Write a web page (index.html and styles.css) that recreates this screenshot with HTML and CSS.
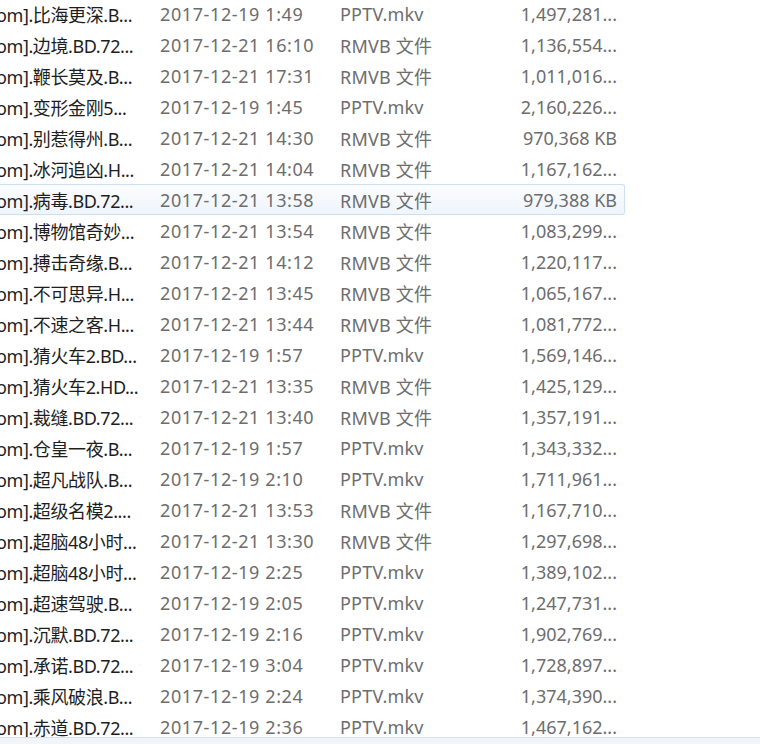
FILE: index.html
```html
<!DOCTYPE html>
<html>
  <head>
    <meta charset="utf-8" />
    <title>文件列表</title>
    <link rel="stylesheet" href="styles.css">
  </head>
  <body>
    <div class="pane">
      <div class="list">
        <div class="row"><span class="name"><span class="clip">om].比海更深.B...</span></span><span class="date">2017-12-19 1:49</span><span class="type">PPTV.mkv</span><span class="size">1,497,281...</span></div>
        <div class="row"><span class="name"><span class="clip">om].边境.BD.72...</span></span><span class="date">2017-12-21 16:10</span><span class="type">RMVB 文件</span><span class="size">1,136,554...</span></div>
        <div class="row"><span class="name"><span class="clip">om].鞭长莫及.B...</span></span><span class="date">2017-12-21 17:31</span><span class="type">RMVB 文件</span><span class="size">1,011,016...</span></div>
        <div class="row"><span class="name"><span class="clip">om].变形金刚5...</span></span><span class="date">2017-12-19 1:45</span><span class="type">PPTV.mkv</span><span class="size">2,160,226...</span></div>
        <div class="row"><span class="name"><span class="clip">om].别惹得州.B...</span></span><span class="date">2017-12-21 14:30</span><span class="type">RMVB 文件</span><span class="size">970,368 KB</span></div>
        <div class="row"><span class="name"><span class="clip">om].冰河追凶.H...</span></span><span class="date">2017-12-21 14:04</span><span class="type">RMVB 文件</span><span class="size">1,167,162...</span></div>
        <div class="row hot"><span class="name"><span class="clip">om].病毒.BD.72...</span></span><span class="date">2017-12-21 13:58</span><span class="type">RMVB 文件</span><span class="size">979,388 KB</span></div>
        <div class="row"><span class="name"><span class="clip">om].博物馆奇妙...</span></span><span class="date">2017-12-21 13:54</span><span class="type">RMVB 文件</span><span class="size">1,083,299...</span></div>
        <div class="row"><span class="name"><span class="clip">om].搏击奇缘.B...</span></span><span class="date">2017-12-21 14:12</span><span class="type">RMVB 文件</span><span class="size">1,220,117...</span></div>
        <div class="row"><span class="name"><span class="clip">om].不可思异.H...</span></span><span class="date">2017-12-21 13:45</span><span class="type">RMVB 文件</span><span class="size">1,065,167...</span></div>
        <div class="row"><span class="name"><span class="clip">om].不速之客.H...</span></span><span class="date">2017-12-21 13:44</span><span class="type">RMVB 文件</span><span class="size">1,081,772...</span></div>
        <div class="row"><span class="name"><span class="clip">om].猜火车2.BD...</span></span><span class="date">2017-12-19 1:57</span><span class="type">PPTV.mkv</span><span class="size">1,569,146...</span></div>
        <div class="row"><span class="name"><span class="clip">om].猜火车2.HD...</span></span><span class="date">2017-12-21 13:35</span><span class="type">RMVB 文件</span><span class="size">1,425,129...</span></div>
        <div class="row"><span class="name"><span class="clip">om].裁缝.BD.72...</span></span><span class="date">2017-12-21 13:40</span><span class="type">RMVB 文件</span><span class="size">1,357,191...</span></div>
        <div class="row"><span class="name"><span class="clip">om].仓皇一夜.B...</span></span><span class="date">2017-12-19 1:57</span><span class="type">PPTV.mkv</span><span class="size">1,343,332...</span></div>
        <div class="row"><span class="name"><span class="clip">om].超凡战队.B...</span></span><span class="date">2017-12-19 2:10</span><span class="type">PPTV.mkv</span><span class="size">1,711,961...</span></div>
        <div class="row"><span class="name"><span class="clip">om].超级名模2....</span></span><span class="date">2017-12-21 13:53</span><span class="type">RMVB 文件</span><span class="size">1,167,710...</span></div>
        <div class="row"><span class="name"><span class="clip">om].超脑48小时...</span></span><span class="date">2017-12-21 13:30</span><span class="type">RMVB 文件</span><span class="size">1,297,698...</span></div>
        <div class="row"><span class="name"><span class="clip">om].超脑48小时...</span></span><span class="date">2017-12-19 2:25</span><span class="type">PPTV.mkv</span><span class="size">1,389,102...</span></div>
        <div class="row"><span class="name"><span class="clip">om].超速驾驶.B...</span></span><span class="date">2017-12-19 2:05</span><span class="type">PPTV.mkv</span><span class="size">1,247,731...</span></div>
        <div class="row"><span class="name"><span class="clip">om].沉默.BD.72...</span></span><span class="date">2017-12-19 2:16</span><span class="type">PPTV.mkv</span><span class="size">1,902,769...</span></div>
        <div class="row"><span class="name"><span class="clip">om].承诺.BD.72...</span></span><span class="date">2017-12-19 3:04</span><span class="type">PPTV.mkv</span><span class="size">1,728,897...</span></div>
        <div class="row"><span class="name"><span class="clip">om].乘风破浪.B...</span></span><span class="date">2017-12-19 2:24</span><span class="type">PPTV.mkv</span><span class="size">1,374,390...</span></div>
        <div class="row"><span class="name"><span class="clip">om].赤道.BD.72...</span></span><span class="date">2017-12-19 2:36</span><span class="type">PPTV.mkv</span><span class="size">1,467,162...</span></div>
      </div>
      <div class="scrollbar"></div>
    </div>
  </body>
</html>
```

FILE: styles.css
```css
* {
  margin: 0;
  padding: 0;
  box-sizing: border-box;
}
html,
body {
  width: 100%;
  height: 100%;
  background: #fff;
  overflow: hidden;
}
.pane {
  height: 744px;
  display: flex;
  flex-direction: column;
  font-family: "Noto Sans", "Noto Sans CJK SC", sans-serif;
  font-size: 18px;
}
.list {
  flex: 1;
  margin-top: -2px;
  overflow: hidden;
}
.row {
  width: 625px;
  height: 31px;
  display: grid;
  grid-template-columns: 160px 180px 160px 117px;
  align-items: center;
  border: 1px solid transparent;
  border-left: none;
  border-radius: 0 3px 3px 0;
  color: #6d6d6d;
  white-space: nowrap;
}
.row.hot {
  border-color: #cfdff2;
  background: linear-gradient(#fbfcfe, #eff5fc);
}
.name {
  overflow: hidden;
  color: #1e1e1e;
  letter-spacing: -0.4px;
}
.clip {
  display: block;
  margin-left: -4px;
}
.date {
  letter-spacing: 0.6px;
}
.type {
  letter-spacing: 0.2px;
}
.size {
  text-align: right;
}
.scrollbar {
  height: 7px;
  border-top: 1px solid #d8e1ec;
  background: #f1f5fa;
}
```
